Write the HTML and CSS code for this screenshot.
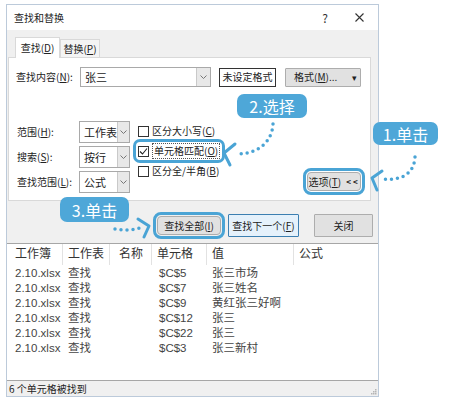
FILE: index.html
```html
<!DOCTYPE html>
<html>
<head>
  <meta charset='utf8'>
  <title>查找和替换</title>
  <link rel="stylesheet" href="styles.css">
</head>
<body>
  <div class='dialog'>
    <div class='titlebar'>
      <span class='title'>查找和替换</span>
      <span class='help'>?</span>
      <svg class='close' width='9' height='9' viewBox='0 0 9 9'><path d='M0.5 0.5L8.5 8.5M8.5 0.5L0.5 8.5' stroke='#333' stroke-width='1.1'/></svg>
    </div>

    <div class='tabs'>
      <span class='tab active'>查找(<u>D</u>)</span>
      <span class='tab'>替换(<u>P</u>)</span>
    </div>

    <div class='panel'>
      <div class='find-row'>
        <span class='label'>查找内容(<u>N</u>):</span>
        <div class='combo wide'>
          <span class='value'>张三</span>
          <span class='drop'><svg width='7' height='4' viewBox='0 0 7 4'><path d='M0.5 0.5L3.5 3.5L6.5 0.5' fill='none' stroke='#777'/></svg></span>
        </div>
        <div class='preview'>未设定格式</div>
        <div class='btn fmt'>格式(<u>M</u>)...<span class='caret'>&#9662;</span></div>
      </div>

      <div class='options'>
        <div class='fields'>
          <div class='field'>
            <span class='label'>范围(<u>H</u>):</span>
            <div class='combo small'>
              <span class='value'>工作表</span>
              <span class='drop'><svg width='7' height='4' viewBox='0 0 7 4'><path d='M0.5 0.5L3.5 3.5L6.5 0.5' fill='none' stroke='#777'/></svg></span>
            </div>
          </div>
          <div class='field'>
            <span class='label'>搜索(<u>S</u>):</span>
            <div class='combo small'>
              <span class='value'>按行</span>
              <span class='drop'><svg width='7' height='4' viewBox='0 0 7 4'><path d='M0.5 0.5L3.5 3.5L6.5 0.5' fill='none' stroke='#777'/></svg></span>
            </div>
          </div>
          <div class='field'>
            <span class='label'>查找范围(<u>L</u>):</span>
            <div class='combo small'>
              <span class='value'>公式</span>
              <span class='drop'><svg width='7' height='4' viewBox='0 0 7 4'><path d='M0.5 0.5L3.5 3.5L6.5 0.5' fill='none' stroke='#777'/></svg></span>
            </div>
          </div>
        </div>

        <div class='checks'>
          <div class='check'><span class='box'></span>区分大小写(<u>C</u>)</div>
          <div class='check hl'>
            <span class='box'><svg width='9' height='9' viewBox='0 0 9 9'><path d='M1 4.5L3.5 7L8 1.5' fill='none' stroke='#222' stroke-width='1.1'/></svg></span>
            <span class='focus'>单元格匹配(<u>O</u>)</span>
          </div>
          <div class='check'><span class='box'></span>区分全/半角(<u>B</u>)</div>
        </div>

        <div class='btn opt hl'>选项(<u>T</u>)<span class='chev'>&lt;&lt;</span></div>
      </div>
    </div>

    <div class='actions'>
      <div class='btn all hl'>查找全部(<u>I</u>)</div>
      <div class='btn next'>查找下一个(<u>F</u>)</div>
      <div class='btn shut'>关闭</div>
    </div>

    <div class='results'>
      <div class='row head'>
        <span>工作簿</span><span>工作表</span><span>名称</span><span>单元格</span><span>值</span><span>公式</span>
      </div>
      <div class='rows'>
        <div class='row'><span>2.10.xlsx</span><span>查找</span><span></span><span>$C$5</span><span>张三市场</span><span></span></div>
        <div class='row'><span>2.10.xlsx</span><span>查找</span><span></span><span>$C$7</span><span>张三姓名</span><span></span></div>
        <div class='row'><span>2.10.xlsx</span><span>查找</span><span></span><span>$C$9</span><span>黄红张三好啊</span><span></span></div>
        <div class='row'><span>2.10.xlsx</span><span>查找</span><span></span><span>$C$12</span><span>张三</span><span></span></div>
        <div class='row'><span>2.10.xlsx</span><span>查找</span><span></span><span>$C$22</span><span>张三</span><span></span></div>
        <div class='row'><span>2.10.xlsx</span><span>查找</span><span></span><span>$C$3</span><span>张三新村</span><span></span></div>
      </div>
    </div>

    <div class='status'>
      <span>6 个单元格被找到</span>
      <svg class='grip' width='7' height='7' viewBox='0 0 7 7' fill='#b5b5b5'><rect x='5' y='1' width='1.5' height='1.5'/><rect x='3' y='3' width='1.5' height='1.5'/><rect x='5' y='3' width='1.5' height='1.5'/><rect x='1' y='5' width='1.5' height='1.5'/><rect x='3' y='5' width='1.5' height='1.5'/><rect x='5' y='5' width='1.5' height='1.5'/></svg>
    </div>
  </div>

  <!-- annotations drawn over the dialog -->
  <div class='callout c1'>1.单击</div>
  <div class='callout c2'>2.选择</div>
  <div class='callout c3'>3.单击</div>

  <svg class='arrows' width='452' height='399' viewBox='0 0 452 399'>
    <g fill='none' stroke='#4aa4d5' stroke-linecap='round' stroke-linejoin='round'>
      <path class='dots' d='M415 157 C414 175 400 181 381 179'/>
      <path class='head' d='M382 171 L372 178 L377 190'/>
      <path class='dots' d='M273 124 C272 142 258 154 237 154'/>
      <path class='head' d='M235 144 L224 153 L230 165'/>
      <path class='dots' d='M115 229 C125 231 134 230 140 228'/>
      <path class='head' d='M138 219 L149 226 L144 237'/>
    </g>
  </svg>
</body>
</html>
```

FILE: styles.css
```css
* {
  box-sizing: border-box;
}
html, body {
  margin: 0;
  padding: 0;
}
body {
  position: relative;
  width: 452px;
  height: 399px;
  overflow: hidden;
  background: #fff;
  font-family: "Noto Sans CJK SC", "Noto Sans", sans-serif;
  font-size: 10px;
  line-height: 1;
  color: #222;
}
u {
  text-decoration-thickness: 1px;
  text-underline-offset: 1px;
}

.dialog {
  margin: 4px 0 0 6px;
  width: 373px;
  border: 1px solid #bccada;
  background: #f0f0f0;
}
.titlebar {
  display: flex;
  align-items: center;
  height: 25px;
  padding: 0 14px 0 7px;
  background: #fff;
}
.titlebar .help {
  margin-left: auto;
  margin-right: 27px;
  font-size: 12px;
  color: #333;
}

/* tabs */
.tabs {
  display: flex;
  align-items: flex-end;
  height: 27px;
  padding-left: 8px;
}
.tab {
  width: 40px;
  height: 18px;
  line-height: 17px;
  text-align: center;
  border: 1px solid #d9d9d9;
  border-bottom: none;
  background: #f4f4f4;
}
.tab.active {
  position: relative;
  z-index: 1;
  width: 45px;
  height: 21px;
  line-height: 20px;
  margin-bottom: -1px;
  background: #fff;
}

.panel {
  width: 363px;
  height: 144px;
  margin-left: 1px;
  padding: 9px 9px 0 7px;
  border: 1px solid #d9d9d9;
  background: #fff;
}
.find-row {
  display: flex;
  align-items: center;
  height: 20px;
}
.find-row .label {
  width: 65px;
}
.combo {
  display: flex;
  border: 1px solid #a9a9a9;
  background: #fff;
}
.combo .value {
  flex: 1;
  display: flex;
  align-items: center;
  padding-left: 4px;
  font-size: 11px;
}
.combo .drop {
  display: flex;
  align-items: center;
  justify-content: center;
  border-left: 1px solid #c9c9c9;
  background: #e8e8e8;
}
.combo.wide {
  width: 133px;
  height: 20px;
}
.combo.wide .drop {
  width: 14px;
}
.combo.small {
  width: 51px;
  height: 22px;
}
.combo.small .drop {
  width: 12px;
}
.preview {
  display: flex;
  align-items: center;
  justify-content: center;
  width: 58px;
  height: 19px;
  margin-left: 8px;
  border: 1px solid #333;
  background: #fff;
}
.btn {
  display: flex;
  align-items: center;
  justify-content: center;
  height: 23px;
  border: 1px solid #adadad;
  background: #e1e1e1;
  border-radius: 1px;
}
.btn.fmt {
  width: 77px;
  height: 19px;
  margin-left: 9px;
  padding-left: 8px;
}
.btn.fmt .caret {
  margin-left: auto;
  margin-right: 3px;
  font-size: 9px;
}

.options {
  display: flex;
  margin-top: 34px;
}
.fields {
  display: flex;
  flex-direction: column;
  gap: 3px;
}
.field {
  display: flex;
  align-items: center;
}
.field .label {
  width: 63px;
  padding-left: 1px;
}
.checks {
  display: flex;
  flex-direction: column;
  margin-left: 5px;
}
.check {
  display: flex;
  align-items: center;
  height: 20px;
  padding: 0 3px;
}
.check .box {
  display: flex;
  align-items: center;
  justify-content: center;
  width: 11px;
  height: 11px;
  margin-right: 3px;
  border: 1px solid #333;
  background: #fff;
}
.check .focus {
  padding: 2px 1px;
  border: 1px dotted #555;
}
.hl {
  outline: 3px solid #4aa4d5;
  border-radius: 4px;
}
.check.hl {
  outline-offset: -1px;
  border-radius: 5px;
}
.btn.opt {
  align-self: flex-end;
  width: 54px;
  height: 19px;
  margin: 0 0 2px auto;
  outline-offset: 1px;
}
.btn.opt .chev {
  margin-left: 5px;
  font-size: 8px;
  font-weight: bold;
  letter-spacing: 2px;
}

.actions {
  display: flex;
  align-items: center;
  justify-content: flex-end;
  height: 23px;
  margin-top: 13px;
  padding-right: 5px;
}
.btn.all {
  width: 64px;
  height: 19px;
  outline-offset: 1px;
}
.btn.next {
  width: 71px;
  margin-left: 7px;
  border-color: #3c7fb1;
  background: #e5f1fb;
}
.btn.shut {
  width: 59px;
  margin-left: 15px;
}

/* results list */
.results {
  height: 138px;
  margin-top: 6px;
  border-top: 1px solid #a6a6a6;
  border-bottom: 1px solid #a6a6a6;
  background: #fff;
  font-family: "Liberation Sans", "Noto Sans CJK SC", sans-serif;
  font-size: 11.5px;
  color: #444;
}
.row {
  display: grid;
  grid-template-columns: 56px 47px 42px 55px 87px 1fr;
  line-height: 15px;
}
.row span {
  padding-left: 5px;
  white-space: nowrap;
  overflow: hidden;
}
.row span:first-child {
  padding-left: 8px;
}
.row span:nth-child(3) {
  padding-left: 9px;
}
.row span:nth-child(4) {
  padding-left: 7px;
}
.row.head {
  height: 21px;
  line-height: 21px;
  font-size: 12px;
  color: #333;
}
.row.head span {
  border-right: 1px solid #e2e2e2;
}
.row.head span:nth-child(4) {
  padding-left: 5px;
}
.row.head span:last-child {
  border-right: none;
}
.rows {
  padding-top: 1px;
}
.status {
  display: flex;
  align-items: center;
  height: 15px;
  padding: 0 1px 0 2px;
}
.status .grip {
  margin-left: auto;
  margin-top: 6px;
}

/* annotations */
.callout {
  position: absolute;
  display: flex;
  align-items: center;
  justify-content: center;
  border-radius: 7px;
  background: #4ea7d8;
  color: #fff;
  font-size: 16px;
}
.c1 {
  left: 373px;
  top: 122px;
  width: 65px;
  height: 23px;
}
.c2 {
  left: 237px;
  top: 94px;
  width: 70px;
  height: 24px;
}
.c3 {
  left: 60px;
  top: 197px;
  width: 69px;
  height: 25px;
}
.arrows {
  position: absolute;
  left: 0;
  top: 0;
  pointer-events: none;
}
.arrows .dots {
  stroke-width: 3.5;
  stroke-dasharray: 0 6;
}
.arrows .head {
  stroke-width: 3;
}
```
